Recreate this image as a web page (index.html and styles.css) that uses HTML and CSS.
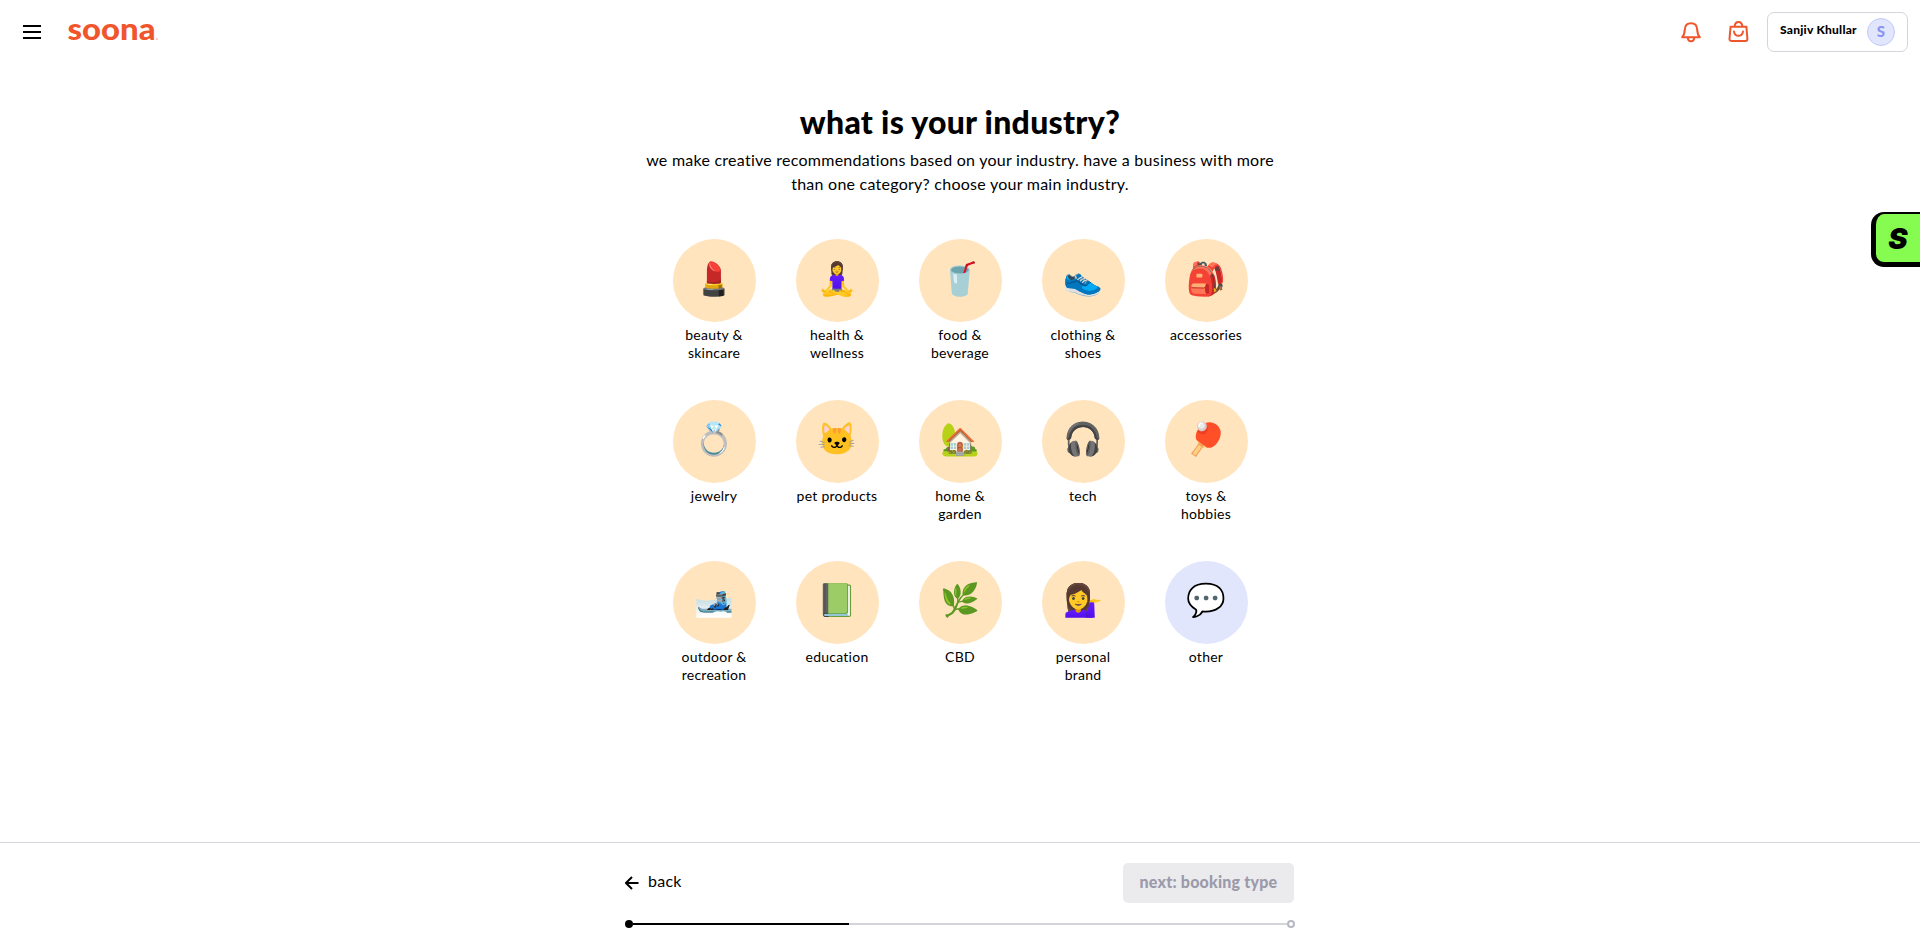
FILE: index.html
```html
<!DOCTYPE html>
<html lang="en">
<head>
<meta charset="utf-8">
<title>soona</title>
<link rel="stylesheet" href="styles.css">
</head>
<body>
<header class="topbar">
  <button class="menu" aria-label="menu"><span></span><span></span><span></span></button>
  <svg class="logo" width="90" height="28" viewBox="0 0 90 28"><text x="-0.500" y="22" textLength="88" lengthAdjust="spacingAndGlyphs">soona</text><circle cx="88.900" cy="21" r=".9" class="logo-dot"/></svg>
  <div class="actions">
    <svg class="bell" width="20" height="21" viewBox="0 0 20 21"><path d="M1.200 15.200C3 13.400 3.600 11.500 3.800 7.600 4 3.600 6.500 1.200 10 1.200s6 2.400 6.200 6.400c.2 3.900.8 5.800 2.600 7.600zM6.700 15.600c.3 2.500 1.600 3.700 3.300 3.700s3-1.200 3.300-3.700"/></svg>
    <svg class="bag" width="21" height="21" viewBox="0 0 21 21"><path d="M2.600 5.700h15.800l1 12.200q0 2-2 2H3.400q-2 0-1.900-2zM6.600 5.500C6.900 2.600 8.200 1 10.500 1s3.600 1.600 3.900 4.500M6 10.600c.5 2.900 2.100 4.200 4.500 4.200s4-1.300 4.500-4.200"/></svg>
    <div class="account"><span class="name">Sanjiv Khullar</span><span class="avatar">S</span></div>
  </div>
</header>
<aside class="tab"><span>S</span></aside>
<main class="content">
  <h1>what is your industry?</h1>
  <p class="lead">we make creative recommendations based on your industry. have a business with more than one category? choose your main industry.</p>
  <div class="grid">
    <div class="item"><div class="disc">💄</div><span>beauty &amp; skincare</span></div>
    <div class="item"><div class="disc">🧘‍♀️</div><span>health &amp; wellness</span></div>
    <div class="item"><div class="disc">🥤</div><span>food &amp; beverage</span></div>
    <div class="item"><div class="disc">👟</div><span>clothing &amp; shoes</span></div>
    <div class="item"><div class="disc">🎒</div><span>accessories</span></div>
    <div class="item"><div class="disc raised">💍</div><span>jewelry</span></div>
    <div class="item"><div class="disc raised">🐱</div><span>pet products</span></div>
    <div class="item"><div class="disc raised">🏡</div><span>home &amp; garden</span></div>
    <div class="item"><div class="disc raised">🎧</div><span>tech</span></div>
    <div class="item"><div class="disc raised">🏓</div><span>toys &amp; hobbies</span></div>
    <div class="item"><div class="disc raised">🎿</div><span>outdoor &amp; recreation</span></div>
    <div class="item"><div class="disc raised">📗</div><span>education</span></div>
    <div class="item"><div class="disc raised">🌿</div><span>CBD</span></div>
    <div class="item"><div class="disc raised">💁‍♀️</div><span>personal brand</span></div>
    <div class="item"><div class="disc raised other">💬</div><span>other</span></div>
  </div>
</main>
<footer class="footer">
  <div class="footer-inner">
    <div class="nav">
      <button class="back"><svg width="14" height="14" viewBox="0 0 14 14"><path d="M13.500 7H1.200M7 1 1 7l6 6"/></svg><span>back</span></button>
      <button class="next">next: booking type</button>
    </div>
    <div class="progress"><i class="dot"></i><i class="done"></i><i class="rest"></i><i class="dot end"></i></div>
  </div>
</footer>
</body>
</html>
```
FILE: styles.css
```css
* { box-sizing: border-box; }
body { margin: 0; height: 945px; display: flex; flex-direction: column; background: #fff; color: #000; font-family: Lato, sans-serif; letter-spacing: .25px; overflow: hidden; }
button { border: 0; background: none; padding: 0; font: inherit; color: inherit; letter-spacing: inherit; }
.topbar { height: 64px; padding: 0 12px 0 23px; display: flex; align-items: center; flex: none; }
.menu { width: 18px; display: flex; flex-direction: column; gap: 4px; }
.menu span { height: 2px; background: #000; }
.logo { margin-left: 27px; fill: #f1552c; overflow: visible; }
.logo text { font: 900 30px Lato, sans-serif; letter-spacing: 0; }
.logo-dot { opacity: .45; }
.actions { margin-left: auto; display: flex; align-items: center; }
.bell, .bag { fill: none; stroke: #f1552c; stroke-width: 2; stroke-linejoin: round; stroke-linecap: round; }
.bag { margin: 0 0 1px 27px; }
.account { margin-left: 18px; width: 141px; height: 40px; border: 1px solid #d4d4db; border-radius: 7px; display: flex; align-items: center; justify-content: space-between; padding: 0 12px; }
.name { font-size: 12px; font-weight: 900; line-height: 18px; letter-spacing: .25px; padding-bottom: 4px; white-space: nowrap; }
.avatar { width: 28px; height: 28px; border-radius: 50%; border: 1px solid #c3c9fb; background: #e2e6fc; color: #8a94f3; font-size: 15px; line-height: 18px; font-weight: 900; letter-spacing: 0; display: flex; align-items: center; justify-content: center; padding-bottom: 2px; }
.tab { position: absolute; right: 0; top: 212px; width: 49px; height: 55px; border: solid #000; border-width: 2px 0 5px 5px; border-radius: 13px 0 0 13px; background: #86fb50; display: flex; align-items: center; justify-content: center; font: italic 900 29px Inter, sans-serif; }
.content { flex: 1; display: flex; flex-direction: column; align-items: center; }
h1 { margin: 38px 0 0; font-size: 32px; line-height: 40px; font-weight: 900; letter-spacing: .27px; }
.lead { margin: 6px 0 0; width: 650px; text-align: center; font-size: 16px; line-height: 24px; }
.grid { margin-top: 43px; display: grid; grid-template-columns: repeat(5, 83px); column-gap: 40px; grid-auto-rows: 161px; }
.item { display: flex; flex-direction: column; align-items: center; text-align: center; font-size: 14px; line-height: 18px; }
.item span { margin-top: 4px; }
.disc { width: 83px; height: 83px; border-radius: 50%; background: #ffe4bd; display: flex; align-items: center; justify-content: center; font-size: 32px; line-height: 40px; letter-spacing: 0; padding-bottom: 6px; flex: none; }
.disc.raised { padding-bottom: 8px; }
.disc.other { background: #e2e6fc; }
.footer { height: 103px; border-top: 1px solid #d4d4db; flex: none; }
.footer-inner { width: 670px; margin: 0 auto; padding-top: 20px; }
.nav { display: flex; justify-content: space-between; align-items: center; padding-right: 1px; }
.back { display: flex; align-items: center; gap: 9px; font-size: 16px; line-height: 24px; }
.back span { margin: -4px 0 0; }
.back svg { fill: none; stroke: #000; stroke-width: 2; }
.next { width: 171px; height: 40px; border-radius: 5px; background: #ebebed; color: #9b9aab; font-weight: 900; font-size: 16px; padding-bottom: 4px; letter-spacing: .2px; }
.progress { display: flex; align-items: center; margin-top: 17px; height: 8px; }
.dot { width: 8px; height: 8px; border-radius: 50%; background: #000; }
.done { width: 216px; height: 2px; background: #000; }
.rest { flex: 1; height: 2px; background: #d4d4db; }
.dot.end { background: #fff; border: 2px solid #b8b8c4; }
```
